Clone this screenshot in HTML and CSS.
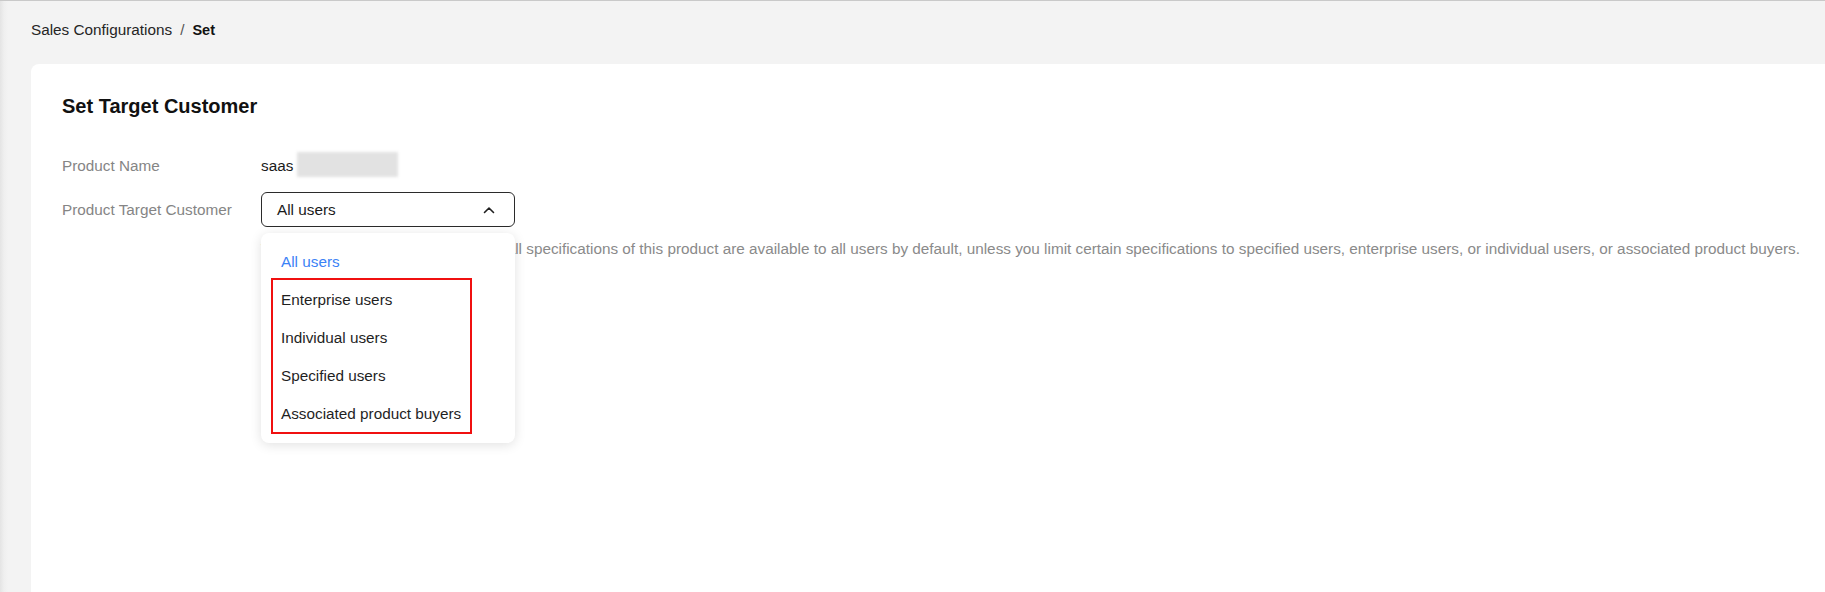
FILE: index.html
```html
<!DOCTYPE html>
<html lang="en">
<head>
<meta charset="utf-8">
<title>Set Target Customer</title>
<link rel="stylesheet" href="styles.css">
</head>
<body>
<div class="page">
  <nav class="breadcrumb">
    <span class="crumb">Sales Configurations</span>
    <span class="sep">/</span>
    <span class="crumb current">Set</span>
  </nav>
  <main class="card">
    <h1 class="title">Set Target Customer</h1>
    <div class="form">
      <div class="row row-name">
        <div class="label">Product Name</div>
        <div class="value">saas<span class="masked"></span></div>
      </div>
      <div class="row row-target">
        <div class="label">Product Target Customer</div>
        <div class="field">
          <div class="select">
            <span class="select-text">All users</span>
            <svg class="chevron" width="12" height="8" viewBox="0 0 12 8"><polyline points="1.5,6.5 6,2 10.5,6.5" fill="none" stroke="#1f1f1f" stroke-width="1.6" stroke-linecap="round" stroke-linejoin="round"/></svg>
          </div>
          <ul class="menu">
            <li class="opt active">All users</li>
            <li class="group">
              <ul class="group-list">
                <li class="opt">Enterprise users</li>
                <li class="opt">Individual users</li>
                <li class="opt">Specified users</li>
                <li class="opt">Associated product buyers</li>
              </ul>
            </li>
          </ul>
        </div>
      </div>
      <div class="row row-help">
        <div class="label"></div>
        <p class="help">Where the target group is All Users, all specifications of this product are available to all users by default, unless you limit certain specifications to specified users, enterprise users, or individual users, or associated product buyers.</p>
      </div>
    </div>
  </main>
</div>
</body>
</html>
```

FILE: styles.css
```css
html, body {
  margin: 0;
  padding: 0;
  height: 100%;
}
body {
  background: linear-gradient(to right, #e4e4e4 0, #efefef 4px, #f3f3f3 8px, #f3f3f3 100%);
  border-top: 1px solid #c9c9c9;
  box-sizing: border-box;
  font-family: "Liberation Sans", Arial, sans-serif;
  font-size: 15.3px;
  color: #1a1a1a;
  overflow: hidden;
}
.page {
  display: flex;
  flex-direction: column;
  height: 100%;
}
.breadcrumb {
  display: flex;
  align-items: center;
  gap: 8px;
  padding: 19px 0 0 31px;
  height: 20px;
  line-height: 20px;
}
.crumb { color: #252525; }
.sep { color: #555; }
.crumb.current {
  font-weight: bold;
  font-size: 14.5px;
  color: #111;
}
.card {
  flex: 1;
  margin: 24px 0 0 31px;
  background: #fff;
  border-radius: 8px 0 0 0;
  padding: 30px 0 0 31px;
}
.title {
  margin: 0;
  font-size: 20px;
  line-height: 24px;
  font-weight: bold;
  color: #111;
}
.form {
  margin-top: 38px;
}
.row {
  display: flex;
  align-items: center;
}
.label {
  width: 199px;
  flex: none;
  color: #858585;
  line-height: 20px;
}
.value {
  display: flex;
  align-items: center;
  line-height: 20px;
  color: #1a1a1a;
}
.masked {
  display: inline-block;
  width: 101px;
  height: 25px;
  margin: -4px 0 -1px 4px;
  background: #e2e2e2;
  filter: blur(1.5px);
}
.row-target {
  margin-top: 16px;
}
.field {
  position: relative;
}
.select {
  box-sizing: border-box;
  width: 254px;
  height: 35px;
  border: 1px solid #2b2b2b;
  border-radius: 6px;
  display: flex;
  align-items: center;
  justify-content: space-between;
  padding: 0 19px 0 15px;
  color: #1a1a1a;
}
.chevron { display: block; }
.row-help {
  margin-top: 12px;
}
.help {
  margin: 0;
  line-height: 20px;
  color: #8a8a8a;
  white-space: nowrap;
}
.menu {
  position: absolute;
  z-index: 5;
  top: 41px;
  left: 0;
  width: 254px;
  box-sizing: border-box;
  margin: 0;
  padding: 10px 0;
  list-style: none;
  background: #fff;
  border-radius: 8px;
  box-shadow: 0 2px 12px rgba(0, 0, 0, 0.12);
}
.group { position: relative; }
.group-list {
  list-style: none;
  margin: 0;
  padding: 0;
}
.group::after {
  content: "";
  position: absolute;
  left: 10px;
  top: -3px;
  width: 201px;
  bottom: -1px;
  box-sizing: border-box;
  border: 2px solid #f01010;
  pointer-events: none;
}
.opt {
  height: 38px;
  line-height: 38px;
  padding-left: 20px;
  color: #1f1f1f;
}
.opt.active {
  color: #3b82f6;
}
```
